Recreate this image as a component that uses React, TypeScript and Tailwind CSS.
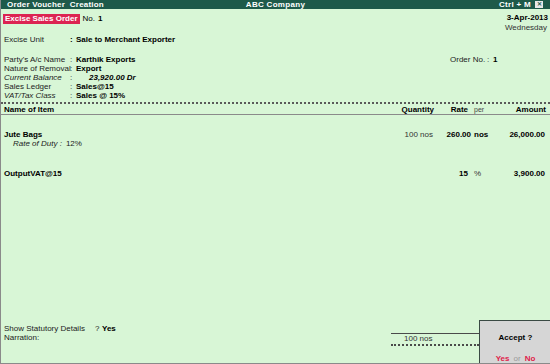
import React from 'react';

const labelRows = [
  { label: "Party's A/c Name", value: 'Karthik Exports', italic: false, indent: false },
  { label: 'Nature of Removal', value: 'Export', italic: false, indent: false },
  { label: 'Current Balance', value: '23,920.00 Dr', italic: true, indent: true },
  { label: 'Sales Ledger', value: 'Sales@15', italic: false, indent: false },
  { label: 'VAT/Tax Class', value: 'Sales @ 15%', italic: true, indent: false },
];

const App: React.FC = () => {
  return (
    <div className="relative w-[550px] h-[364px] overflow-hidden whitespace-nowrap bg-[#d8f6d6] text-[8px] text-black font-['Liberation_Sans',Arial,sans-serif] border-l border-b border-[#8a8a8a]">
      {/* Title bar */}
      <div className="grid grid-cols-3 h-[9px] bg-[#1e5a4a] text-white font-bold leading-[9px] px-[6px]">
        <span className="tracking-[0.2px] whitespace-pre">Order Voucher  Creation</span>
        <span className="text-center tracking-[0.3px]">ABC Company</span>
        <div className="flex justify-end items-center gap-[4px] pr-[1px]">
          <span className="tracking-[0.3px]">Ctrl + M</span>
          <span className="flex items-center justify-center w-[8px] h-[7px] bg-[#e8e8e8] text-[#1e5a4a] text-[6px] leading-[7px]">✕</span>
        </div>
      </div>

      {/* Voucher head */}
      <div className="flex justify-between pl-[2px] pr-[2px]">
        <div className="flex items-center mt-[5px] h-[10px]">
          <span className="bg-[#dc2452] text-white font-bold px-[2px] h-[10px] leading-[10px]">Excise Sales Order</span>
          <span className="ml-[3px]">No.</span>
          <span className="ml-[3px] font-bold">1</span>
        </div>
        <div className="flex flex-col items-end mt-[4px]">
          <span className="font-bold h-[10px] leading-[10px]">3-Apr-2013</span>
          <span className="text-[#333] h-[10px] leading-[10px] pr-[1px]">Wednesday</span>
        </div>
      </div>

      <div className="flex h-[9px] leading-[9px] mt-[2px] pl-[3px]">
        <span className="w-[66px] text-[#222]">Excise Unit</span>
        <span className="w-[6px] font-bold">:</span>
        <span className="font-bold">Sale to Merchant Exporter</span>
      </div>

      {/* Party details */}
      <div className="flex mt-[11px] pl-[3px] pr-[4px]">
        <div className="flex flex-col flex-1">
          {labelRows.map((r) => (
            <div key={r.label} className="flex h-[9px] leading-[9px]">
              <span className={`w-[66px] text-[#222] ${r.italic ? 'italic' : ''}`}>{r.label}</span>
              <span className="w-[6px] text-[#333]">:</span>
              <span className={`font-bold ${r.indent ? 'italic ml-[13px]' : ''}`}>{r.value}</span>
            </div>
          ))}
        </div>
        <div className="flex h-[9px] leading-[9px] w-[96px]">
          <span className="w-[37px] text-[#222]">Order No.</span>
          <span className="w-[6px] text-[#333]">:</span>
          <span className="font-bold">1</span>
        </div>
      </div>

      {/* Table header */}
      <div className="mt-[2px] border-t-2 border-dotted border-[#5a5a5a]" />
      <div className="flex h-[11px] leading-[11px] font-bold border-b border-[#8a8a8a] pl-[3px] pr-[4px]">
        <span className="flex-1">Name of Item</span>
        <span className="w-[60px] text-right">Quantity</span>
        <span className="w-[34px] text-right">Rate</span>
        <span className="w-[33px] pl-[6px] font-normal text-[#444] text-[7px]">per</span>
        <span className="w-[45px] text-right">Amount</span>
      </div>

      {/* Items */}
      <div className="flex flex-col pl-[3px] pr-[5px] pt-[15px]">
        <div className="flex h-[9px] leading-[9px]">
          <span className="flex-1 font-bold">Jute Bags</span>
          <span className="w-[60px] text-right text-[#333]">100 nos</span>
          <span className="w-[38px] text-right font-bold">260.00</span>
          <span className="w-[30px] pl-[3px] font-bold">nos</span>
          <span className="w-[44px] text-right font-bold">26,000.00</span>
        </div>
        <div className="flex h-[9px] leading-[9px] pl-[9px] italic text-[#222]">
          <span>Rate of Duty :</span>
          <span className="not-italic ml-[4px]">12%</span>
        </div>
        <div className="flex h-[9px] leading-[9px] mt-[21px]">
          <span className="flex-1 font-bold">OutputVAT@15</span>
          <span className="w-[60px]" />
          <span className="w-[35px] text-right font-bold">15</span>
          <span className="w-[33px] pl-[6px] text-[#333]">%</span>
          <span className="w-[44px] text-right font-bold">3,900.00</span>
        </div>
      </div>

      {/* Footer */}
      <div className="absolute left-0 top-[324px] flex flex-col pl-[3px]">
        <div className="flex h-[9px] leading-[9px]">
          <span className="w-[91px] text-[#222]">Show Statutory Details</span>
          <span className="w-[7px] text-[#222]">?</span>
          <span className="font-bold">Yes</span>
        </div>
        <div className="h-[9px] leading-[9px] text-[#222]">Narration:</div>
      </div>

      {/* Totals */}
      <div className="absolute left-[390px] top-[333px] w-[88px] border-t border-[#4a4a4a]">
        <div className="h-[10px] leading-[10px] pl-[13px] text-[#333]">100 nos</div>
        <div className="border-t-2 border-dotted border-[#4a4a4a]" />
      </div>

      {/* Accept dialog */}
      <div className="absolute left-[478px] top-[320px] w-[72px] h-[44px] bg-[#d6d6d6] border-t border-l border-[#3a4a44] flex flex-col items-center">
        <span className="mt-[12px] font-bold h-[10px] leading-[10px]">Accept ?</span>
        <div className="mt-[11px] flex gap-[4px] font-bold h-[10px] leading-[10px]">
          <span className="text-[#e0204a]">Yes</span>
          <span className="font-normal text-[#9a9a9a]">or</span>
          <span className="text-[#e0204a]">No</span>
        </div>
      </div>
    </div>
  );
};

export default App;
